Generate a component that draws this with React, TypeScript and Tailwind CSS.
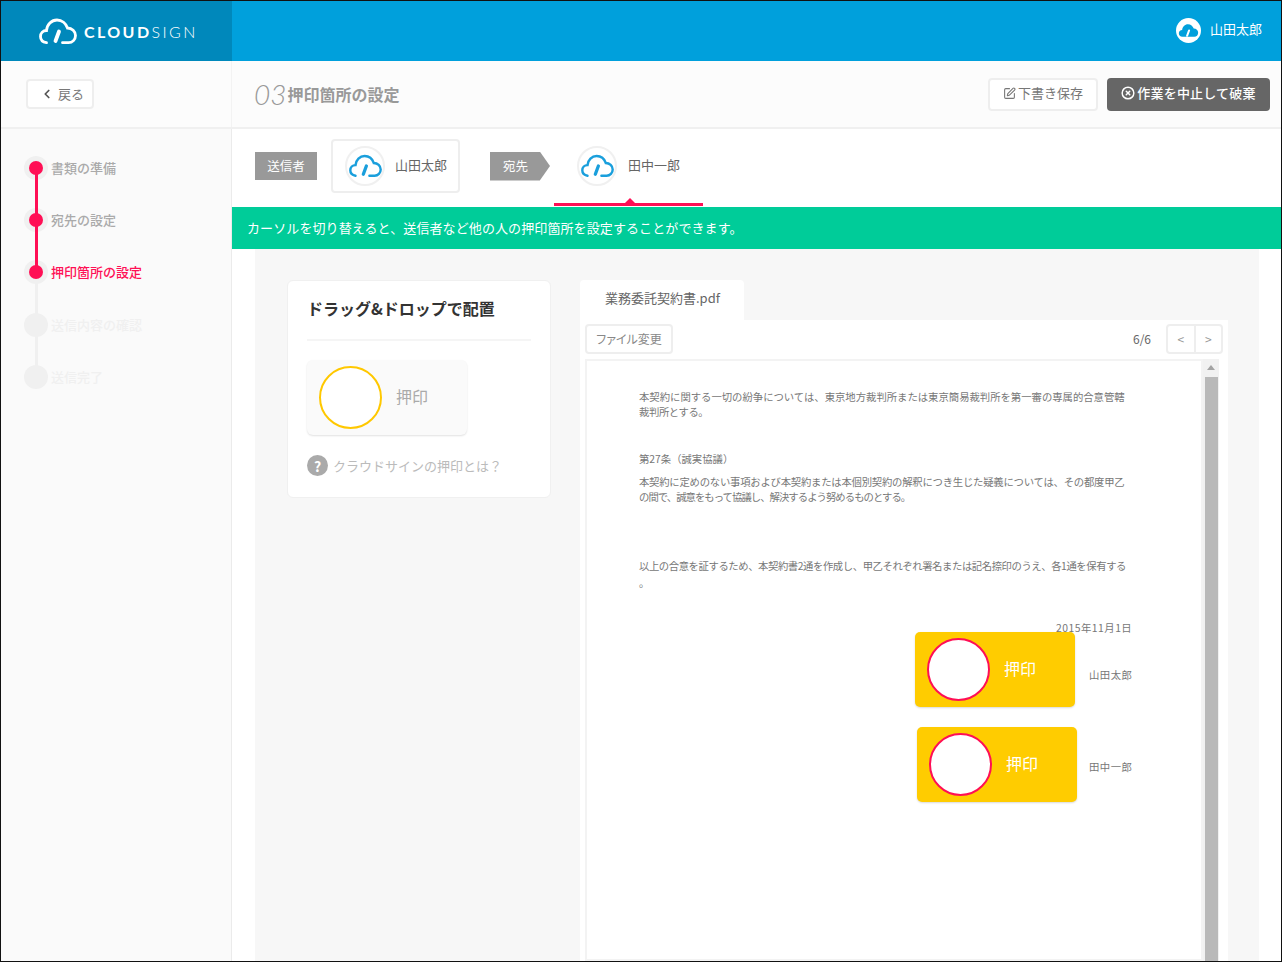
import React from 'react';
import { ChevronLeft, SquarePen, CircleX } from 'lucide-react';

const FONT = "[font-family:'Noto_Sans_CJK_JP','Liberation_Sans',sans-serif]";

const Cloud: React.FC<{ className?: string; color: string; pen?: string; filled?: boolean }> = ({ className, color, pen, filled }) => (
  <svg viewBox="0 0 38 27" className={className} fill="none">
    {filled ? (
      <path d="M8 25C4 25 1.5 22 1.5 18.5C1.5 15 4 12.5 7.5 12.5C8 6.5 12.5 2 18 2C23 2 27 5.5 28.5 10C33 10 36.5 13.5 36.5 17.5C36.5 21.5 33.5 25 29.5 25Z" fill={color} />
    ) : (
      <path d="M7.5 24.7C3.5 24 1.5 21.5 1.5 18.5C1.5 15 4 12.5 7.5 12.5C8 6.5 12.5 2 18 2C23 2 27 5.5 28.5 10C33 10 36.5 13.5 36.5 17.5C36.5 21.5 33.5 24.7 29.5 24.7L23.5 24.7" stroke={color} strokeWidth="2.8" strokeLinecap="round" />
    )}
    <path d="M20 13.5L16.5 23" stroke={pen ?? color} strokeWidth="3.8" strokeLinecap="round" />
  </svg>
);

const Avatar = () => (
  <div className="flex h-[40px] w-[40px] items-center justify-center rounded-full border-2 border-[#f0f0f0] bg-white">
    <Cloud className="w-[33px] h-[24px]" color="#1a9fdc" />
  </div>
);

const steps = [
  { label: '書類の準備', state: 'done' },
  { label: '宛先の設定', state: 'done' },
  { label: '押印箇所の設定', state: 'current' },
  { label: '送信内容の確認', state: 'todo' },
  { label: '送信完了', state: 'todo' },
];

const Sidebar = () => (
  <aside className="w-[231px] shrink-0 border-r border-[#ebebeb] bg-[#fafafa] pl-[23px] pt-[27px]">
    {steps.map((s, i) => (
      <div key={s.label} className="relative flex h-[52.2px] items-start">
        <div className="flex h-[24px] w-[24px] shrink-0 items-center justify-center rounded-full bg-[#f0f0f0]">
          {s.state !== 'todo' && <div className="relative z-10 h-[14px] w-[14px] rounded-full bg-[#ff0f55]" />}
        </div>
        {i < steps.length - 1 && (
          <div className={`absolute left-[10.5px] top-[12px] h-[52px] w-[3px] ${i < 2 ? 'z-[5] bg-[#ff0f55]' : 'bg-[#f0f0f0]'}`} />
        )}
        <span
          className={`ml-[3px] text-[13px] font-medium leading-[24px] ${
            s.state === 'done' ? 'text-[#aaaaaa]' : s.state === 'current' ? 'text-[#ff0f55]' : 'text-[#f0f0f0]'
          }`}
        >
          {s.label}
        </span>
      </div>
    ))}
  </aside>
);

const StampCircle: React.FC<{ border: string }> = ({ border }) => (
  <div className={`h-[63px] w-[63px] rounded-full border-2 bg-white ${border}`} />
);

const PlacedStamp: React.FC<{ className: string }> = ({ className }) => (
  <div className={`absolute flex h-[75px] w-[160px] items-center rounded-[5px] bg-[#ffcc00] pl-[12px] shadow-[0_1px_2px_rgba(0,0,0,0.15)] ${className}`}>
    <StampCircle border="border-[#ff0f55]" />
    <span className="mb-[3px] ml-[14px] text-[16px] text-white">押印</span>
  </div>
);

const PdfPage = () => (
  <div className="relative h-[602px] flex-1 overflow-hidden border-2 border-[#f3f3f3] bg-white">
    <div className="pl-[52px] pt-[28px] text-[10.35px] text-[#777777] [&>p]:h-[15px] [&>p]:whitespace-nowrap [&>p]:leading-[15px]">
      <p>本契約に関する一切の紛争については、東京地方裁判所または東京簡易裁判所を第一審の専属的合意管轄</p>
      <p className="tracking-[-0.4px]">裁判所とする。</p>
      <p className="mt-[32px]">第27条（誠実協議）</p>
      <p className="mt-[8px] tracking-[-0.22px]">本契約に定めのない事項および本契約または本個別契約の解釈につき生じた疑義については、その都度甲乙</p>
      <p className="tracking-[-0.95px]">の間で、誠意をもって協議し、解決するよう努めるものとする。</p>
      <p className="mt-[54px] tracking-[-0.42px]">以上の合意を証するため、本契約書2通を作成し、甲乙それぞれ署名または記名捺印のうえ、各1通を保有する</p>
      <p className="mt-[2px]">。</p>
      <p className="mt-[30px] pl-[417px] tracking-[0.5px]">2015年11月1日</p>
      <p className="mt-[32px] pl-[450px] tracking-[0.5px]">山田太郎</p>
      <p className="mt-[77px] pl-[450px] tracking-[0.5px]">田中一郎</p>
    </div>
    <PlacedStamp className="left-[328px] top-[271px]" />
    <PlacedStamp className="left-[330px] top-[366px]" />
  </div>
);

const Scrollbar = () => (
  <div className="flex w-[16px] shrink-0 flex-col items-center bg-[#f1f1f1] pt-[6px]">
    <div className="h-0 w-0 border-x-[4px] border-b-[5px] border-x-transparent border-b-[#a3a3a3]" />
    <div className="mt-[7px] w-[13px] flex-1 bg-[#b9b9b9]" />
  </div>
);

export default function App() {
  return (
    <div className={`flex h-[962px] w-[1282px] flex-col overflow-hidden border border-[#111111] bg-white ${FONT}`}>
      <header className="flex h-[60px] shrink-0 bg-[#00a0dc]">
        <div className="flex w-[231px] items-center bg-[#0088bb] pl-[38px]">
          <Cloud className="h-[27px] w-[38px]" color="#ffffff" />
          <span className="ml-[7px] mt-[1px] text-[16px] font-bold tracking-[2.4px] text-white [font-family:'Lato','Liberation_Sans',sans-serif]">
            CLOUD<span className="font-light">SIGN</span>
          </span>
        </div>
        <div className="ml-auto flex items-center pb-[2px] pr-[19px]">
          <div className="flex h-[25px] w-[25px] items-center justify-center rounded-full bg-white">
            <Cloud className="h-[15px] w-[21px]" color="#00a0dc" pen="#ffffff" filled />
          </div>
          <span className="mb-[2px] ml-[9px] text-[13px] text-white">山田太郎</span>
        </div>
      </header>

      <div className="flex h-[68px] shrink-0 border-b-2 border-[#f0f0f0] bg-[#fcfcfc]">
        <div className="flex w-[231px] items-center border-r border-[#f3f3f3] pl-[25px]">
          <button className="flex h-[30px] w-[68px] items-center rounded-[4px] border-2 border-[#eeeeee] bg-white pb-[1px] pl-[12px] text-[13px] text-[#777777]">
            <ChevronLeft size={14} strokeWidth={3} className="text-[#555555]" />
            <span className="ml-[4px]">戻る</span>
          </button>
        </div>
        <div className="flex flex-1 items-center pl-[22px] pr-[11px]">
          <span className="text-[28px] font-light italic leading-none text-[#999999] [font-family:'Lato','Liberation_Sans',sans-serif]">03</span>
          <h1 className="ml-[1px] text-[16px] font-bold text-[#999999]">押印箇所の設定</h1>
          <button className="ml-auto flex h-[33px] w-[110px] items-center justify-center rounded-[4px] border-2 border-[#eeeeee] bg-white pb-[2px] text-[13px] text-[#777777]">
            <SquarePen size={13} className="mr-[2px]" />
            下書き保存
          </button>
          <button className="ml-[9px] flex h-[33px] w-[163px] items-center justify-center rounded-[4px] bg-[#666666] pb-[2px] text-[13px] font-medium tracking-[0.2px] text-white">
            <CircleX size={14} strokeWidth={2.5} className="mr-[2px]" />
            作業を中止して破棄
          </button>
        </div>
      </div>

      <div className="flex flex-1 overflow-hidden">
        <Sidebar />
        <main className="flex flex-1 flex-col overflow-hidden">
          <div className="flex h-[78px] shrink-0 items-center pb-[4px] pl-[23px]">
            <div className="flex h-[28px] w-[62px] items-center justify-center bg-[#999999] text-[12.5px] text-white">送信者</div>
            <div className="ml-[14px] flex h-[54px] w-[129px] items-center rounded-[4px] border-2 border-[#eeeeee] pl-[12px]">
              <Avatar />
              <span className="mb-[2px] ml-[10px] text-[13px] text-[#666666]">山田太郎</span>
            </div>
            <div className="ml-[30px] flex h-[29px] w-[60px] items-center bg-[#999999] pl-[13px] text-[12.5px] text-white [clip-path:polygon(0_0,83%_0,100%_50%,83%_100%,0_100%)]">宛先</div>
            <div className="relative ml-[4px] flex h-[74px] w-[149px] items-center pl-[23px]">
              <Avatar />
              <span className="mb-[2px] ml-[11px] text-[13px] text-[#666666]">田中一郎</span>
              <div className="absolute -bottom-[3px] left-0 h-[3px] w-full bg-[#ff0f55]" />
              <div className="absolute bottom-0 left-[71px] h-0 w-0 border-x-[5px] border-b-[5px] border-x-transparent border-b-[#ff0f55]" />
            </div>
          </div>

          <div className="flex h-[42px] shrink-0 items-center bg-[#00cc99] pl-[15px] text-[13px] tracking-[0.1px] text-white">
            カーソルを切り替えると、送信者など他の人の押印箇所を設定することができます。
          </div>

          <div className="ml-[23px] mr-[22px] flex flex-1 items-start overflow-hidden bg-[#f7f7f7] pl-[32px] pt-[31px]">
            <div className="h-[218px] w-[264px] shrink-0 rounded-[6px] border border-[#f0f0f0] bg-white px-[19px] pt-[14px]">
              <h2 className="border-b-2 border-[#f5f5f5] pb-[18px] text-[16px] font-bold leading-[26px] text-[#333333]">ドラッグ&ドロップで配置</h2>
              <div className="mt-[19px] flex h-[75px] w-[160px] items-center rounded-[6px] bg-[#fafafa] pl-[12px] shadow-[0_1px_2px_rgba(0,0,0,0.12)]">
                <StampCircle border="border-[#ffc800]" />
                <span className="mb-[3px] ml-[14px] text-[16px] text-[#aaaaaa]">押印</span>
              </div>
              <div className="mt-[20px] flex items-center">
                <span className="flex h-[21px] w-[21px] items-center justify-center rounded-full bg-[#aaaaaa] text-[14px] font-bold leading-none text-white">?</span>
                <span className="ml-[5px] text-[13px] text-[#bbbbbb]">クラウドサインの押印とは？</span>
              </div>
            </div>

            <div className="ml-[29px] flex w-[648px] shrink-0 flex-col">
              <div className="flex h-[40px] w-[164px] items-center rounded-t-[4px] bg-white pb-[5px] pl-[25px] text-[13px] text-[#666666]">
                業務委託契約書.pdf
              </div>
              <div className="bg-white pl-[5px] pr-[5px]">
                <div className="flex h-[39px] items-start pt-[4px]">
                  <button className="h-[30px] w-[88px] rounded-[4px] border-2 border-[#eeeeee] text-[12px] text-[#888888] [font-feature-settings:'palt']">ファイル変更</button>
                  <span className="ml-auto mt-[6px] text-[12px] text-[#666666]">6/6</span>
                  <div className="ml-[15px] flex h-[30px] w-[57px] rounded-[4px] border-2 border-[#eeeeee] text-[12px] text-[#999999]">
                    <span className="flex flex-1 items-center justify-center border-r-2 border-[#eeeeee]">&lt;</span>
                    <span className="flex flex-1 items-center justify-center">&gt;</span>
                  </div>
                </div>
                <div className="flex pr-[4px]">
                  <PdfPage />
                  <Scrollbar />
                </div>
              </div>
            </div>
          </div>
        </main>
      </div>
    </div>
  );
}
